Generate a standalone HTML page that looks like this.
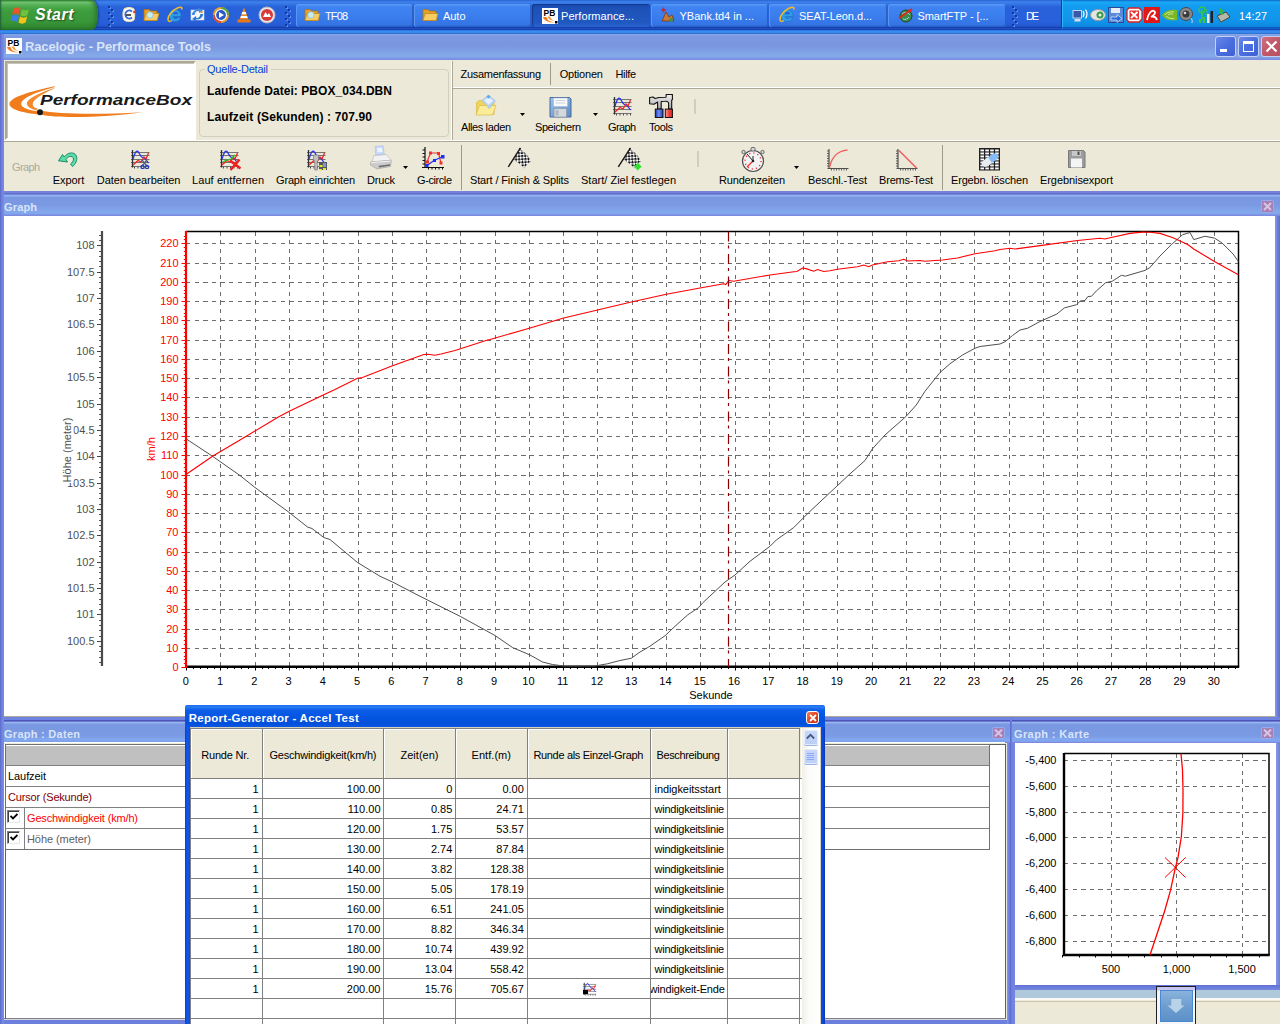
<!DOCTYPE html>
<html><head><meta charset="utf-8"><title>Racelogic - Performance Tools</title>
<style>
html,body{margin:0;padding:0;overflow:hidden;}
html{width:1280px;height:1024px;}
body{width:1280px;height:1024px;overflow:hidden;position:relative;background:#ece9d8;font-family:"Liberation Sans",sans-serif;font-size:11px;color:#000;}
div,svg{position:absolute;box-sizing:border-box;}
.t{white-space:nowrap;}

</style></head>
<body>
<!-- p_taskbar -->
<div style="left:0;top:0;width:1280px;height:30px;background:linear-gradient(#2a62d4 0,#3d82ec 2px,#3474e4 4px,#2862da 7px,#2760da 22px,#2459d0 26px,#163fae 27.500px,#2050c4 28.500px,#1640ae 29.500px,#1640ae 30px)"></div><div style="left:1061px;top:0;width:219px;height:30px;background:linear-gradient(#0c6cc9 0,#1aa8f6 7%,#129cf0 20%,#1094ea 70%,#0e88e0 88%,#0c5cb4 100%);border-left:1px solid #0a3f9a;box-shadow:inset 1px 0 0 #30b8f8"></div><div style="left:1061px;top:27px;width:219px;height:3px;background:linear-gradient(rgba(10,70,180,.8),rgba(20,90,200,.7),rgba(10,60,170,.9))"></div><div style="left:0;top:0;width:98px;height:30px;border-radius:0 6px 6px 0/0 15px 15px 0;background:linear-gradient(#2f7d2f 0,#4ea44e 1px,#72c472 2.500px,#5ab45a 4.500px,#45a445 8px,#3c9c3c 12px,#399639 22px,#308830 27px,#266e26 30px);box-shadow:inset -4px 0 5px -2px #2a702a,inset 2px 0 2px -1px #1f5c3c,1px 0 2px #173f8f"></div><svg style="left:10.500px;top:4.500px" width="22" height="20" viewBox="0 0 22 20"><path d="M2.500 3.500c2.500-1.500 4.500-1.300 7 .3l-1.500 6c-2.500-1.500-4.500-1.700-7-.3z" fill="#e8542c"/><path d="M10.800 4.200c2.500 1.500 4.700 1.500 7.200 0l-1.600 6c-2.400 1.500-4.600 1.500-7.100 0z" fill="#6fc03a"/><path d="M.8 10.800c2.500-1.400 4.500-1.200 7 .3l-1.500 6c-2.500-1.500-4.500-1.700-7-.3z" fill="#3c7fe8"/><path d="M9 11.500c2.500 1.500 4.700 1.500 7.200 0l-1.600 6c-2.400 1.500-4.600 1.500-7.100 0z" fill="#f6c21c"/></svg><div class="t" style="left:35px;top:4.5px;font-size:16px;line-height:19px;color:#fff;letter-spacing:0.512px;font-weight:bold;font-style:italic;text-shadow:1px 1px 1.500px #1d4f1d;">Start</div><div style="left:108.5px;top:6.5px;width:2px;height:2px;background:#5a8ef0"></div><div style="left:107.5px;top:5.5px;width:2px;height:2px;background:#1238a0"></div><div style="left:111.5px;top:9.5px;width:2px;height:2px;background:#5a8ef0"></div><div style="left:110.5px;top:8.5px;width:2px;height:2px;background:#1238a0"></div><div style="left:108.5px;top:12.5px;width:2px;height:2px;background:#5a8ef0"></div><div style="left:107.5px;top:11.5px;width:2px;height:2px;background:#1238a0"></div><div style="left:111.5px;top:15.5px;width:2px;height:2px;background:#5a8ef0"></div><div style="left:110.5px;top:14.5px;width:2px;height:2px;background:#1238a0"></div><div style="left:108.5px;top:18.5px;width:2px;height:2px;background:#5a8ef0"></div><div style="left:107.5px;top:17.5px;width:2px;height:2px;background:#1238a0"></div><div style="left:111.5px;top:21.5px;width:2px;height:2px;background:#5a8ef0"></div><div style="left:110.5px;top:20.5px;width:2px;height:2px;background:#1238a0"></div><div style="left:108.5px;top:24.5px;width:2px;height:2px;background:#5a8ef0"></div><div style="left:107.5px;top:23.5px;width:2px;height:2px;background:#1238a0"></div><svg style="left:121px;top:6px" width="16" height="17" viewBox="0 0 16 17"><path d="M3 3c2-2 8-2 10 0c1 3 1 8 0 11c-2 2-8 2-10 0c-1.500-3-1.500-8 0-11z" fill="#fbfbf4" stroke="#f0e0a0" stroke-width="1"/><path d="M11 5.500a4 4 0 1 0 0 6" fill="none" stroke="#3a6ad8" stroke-width="1.800"/><path d="M5 9h5" stroke="#101010" stroke-width="1.400"/><circle cx="13.300" cy="6" r="1.200" fill="#e04030"/></svg><svg style="left:143px;top:7px" width="17" height="16" viewBox="0 0 17 16"><path d="M1 2.500h5l1.500 1.500H14v9.500H1z" fill="#e8a028" stroke="#b07010" stroke-width=".8"/><path d="M3 6.500h13l-1.800 7H1z" fill="#f8cc60" stroke="#c08820" stroke-width=".8"/><circle cx="7" cy="8" r="3.200" fill="#c8ecf0" stroke="#8cc0d0" stroke-width=".8"/></svg><svg style="left:166px;top:6px" width="18" height="18" viewBox="0 0 18 18"><path d="M3 10a6 6 0 0 1 12-.8v1.300h-8a2.600 2.600 0 0 0 4.800 1h3a6.100 6.100 0 0 1-11.800-1.500z" fill="#2e9fe6" stroke="#1a70c8" stroke-width=".6"/><path d="M7 8.200h5a2.500 2.500 0 0 0-5 0z" fill="#245edb"/><path d="M15.500 3.500c1.500-2-.5-3-4-1.500c-5 2.200-10 8-9.500 12c.3 2 2.500 1.500 4 .5" fill="none" stroke="#f4b828" stroke-width="1.500"/></svg><svg style="left:189px;top:6px" width="17" height="17" viewBox="0 0 17 17"><rect x="2" y="4" width="13" height="10" fill="#f8f8f8" stroke="#c8d0e0" stroke-width=".6"/><path d="M3 9c0-4 4-6 7-5l-1-2.500 5 2.500-4 3-.3-2c-2-.5-4 1-4 4z" fill="#3a8ae8"/><path d="M14 8c0 4-4 6-7 5l1 2.500-5-2.500 4-3 .3 2c2 .5 4-1 4-4z" fill="#2a78d8"/><rect x="11.500" y="5" width="2" height="2" fill="#e88830"/></svg><svg style="left:212px;top:6px" width="18" height="18" viewBox="0 0 18 18"><circle cx="9" cy="9" r="8" fill="#e8a030"/><path d="M9 1a8 8 0 0 1 8 8H9z" fill="#58a838"/><path d="M1 9a8 8 0 0 0 8 8V9z" fill="#d84830"/><circle cx="9" cy="9" r="5.500" fill="#2a58c8" stroke="#fff" stroke-width="1.200"/><path d="M7 6l5 3-5 3z" fill="#fff"/></svg><svg style="left:235px;top:6px" width="18" height="18" viewBox="0 0 18 18"><path d="M9 1.500l4.500 12h-9z" fill="#f08a1c"/><path d="M7.300 6h3.400l.8 2.200h-5zM6 10h6l.7 2H5.300z" fill="#fff"/><path d="M2.500 13.500h13v3h-13z" fill="#e87818"/></svg><svg style="left:258px;top:6px" width="18" height="18" viewBox="0 0 18 18"><circle cx="9" cy="9" r="8" fill="#e8e8e8" stroke="#b8b8b8"/><circle cx="9" cy="9" r="6" fill="#d83838"/><path d="M5 11l2.500-5 2 3 1.500-2 2 4z" fill="#fff"/></svg><div style="left:285.5px;top:6.5px;width:2px;height:2px;background:#5a8ef0"></div><div style="left:284.5px;top:5.5px;width:2px;height:2px;background:#1238a0"></div><div style="left:288.5px;top:9.5px;width:2px;height:2px;background:#5a8ef0"></div><div style="left:287.5px;top:8.5px;width:2px;height:2px;background:#1238a0"></div><div style="left:285.5px;top:12.5px;width:2px;height:2px;background:#5a8ef0"></div><div style="left:284.5px;top:11.5px;width:2px;height:2px;background:#1238a0"></div><div style="left:288.5px;top:15.5px;width:2px;height:2px;background:#5a8ef0"></div><div style="left:287.5px;top:14.5px;width:2px;height:2px;background:#1238a0"></div><div style="left:285.5px;top:18.5px;width:2px;height:2px;background:#5a8ef0"></div><div style="left:284.5px;top:17.5px;width:2px;height:2px;background:#1238a0"></div><div style="left:288.5px;top:21.5px;width:2px;height:2px;background:#5a8ef0"></div><div style="left:287.5px;top:20.5px;width:2px;height:2px;background:#1238a0"></div><div style="left:285.5px;top:24.5px;width:2px;height:2px;background:#5a8ef0"></div><div style="left:284.5px;top:23.5px;width:2px;height:2px;background:#1238a0"></div><div style="left:296px;top:4px;width:117px;height:23px;border-radius:3px;background:linear-gradient(#5e9bf7 0,#3f84f2 12%,#3a7cec 60%,#3474e4 90%,#2b62cf 100%);box-shadow:inset 1px 0 0 #5a96f4,inset -1px -1px 0 #2a5fc8;"></div><svg style="left:304px;top:7px" width="17" height="16" viewBox="0 0 17 16"><path d="M1 2.500h5l1.500 1.500H14v9.500H1z" fill="#e8a028" stroke="#b07010" stroke-width=".8"/><path d="M3 6.500h13l-1.800 7H1z" fill="#f8cc60" stroke="#c08820" stroke-width=".8"/><circle cx="7" cy="8" r="3.200" fill="#c8ecf0" stroke="#8cc0d0" stroke-width=".8"/></svg><div class="t" style="left:325px;top:9px;font-size:11px;line-height:14px;color:#fff;letter-spacing:-0.890px;">TF08</div><div style="left:414px;top:4px;width:117px;height:23px;border-radius:3px;background:linear-gradient(#5e9bf7 0,#3f84f2 12%,#3a7cec 60%,#3474e4 90%,#2b62cf 100%);box-shadow:inset 1px 0 0 #5a96f4,inset -1px -1px 0 #2a5fc8;"></div><svg style="left:422px;top:7px" width="17" height="16" viewBox="0 0 17 16"><path d="M1 2.500h5l1.500 1.500H14v9.500H1z" fill="#e8a028" stroke="#b07010" stroke-width=".8"/><path d="M3 6.500h13l-1.800 7H1z" fill="#f8cc60" stroke="#c08820" stroke-width=".8"/></svg><div class="t" style="left:443px;top:9px;font-size:11px;line-height:14px;color:#fff;letter-spacing:-0.042px;">Auto</div><div style="left:532px;top:4px;width:118px;height:23px;border-radius:3px;background:linear-gradient(#1b4bb0,#1e52b7 20%,#2058c2 80%,#2a63cd);box-shadow:inset 1px 1px 1px #14398d;"></div><svg style="left:542px;top:8px" width="16" height="16" viewBox="0 0 16 16"><rect width="16" height="16" fill="#fff"/><path d="M1 9c1 4 6 5.500 12 5.500c-5 -.5-8-2.500-8.500-5.500z" fill="#f07c1c"/><path d="M5.500 8.500c.7 2.800 3.500 4.200 7.500 4.500c-3-1-4.500-2.500-4.800-4.500z" fill="#f59a3c"/><rect x="13" y="13" width="2.500" height="2.500" fill="#000"/><text x="1.500" y="7.500" font-family="Liberation Sans" font-weight="bold" font-size="8.500" fill="#000">PB</text></svg><div class="t" style="left:561px;top:9px;font-size:11px;line-height:14px;color:#fff;letter-spacing:0.067px;">Performance...</div><div style="left:651px;top:4px;width:117px;height:23px;border-radius:3px;background:linear-gradient(#5e9bf7 0,#3f84f2 12%,#3a7cec 60%,#3474e4 90%,#2b62cf 100%);box-shadow:inset 1px 0 0 #5a96f4,inset -1px -1px 0 #2a5fc8;"></div><svg style="left:659px;top:7px" width="17" height="17" viewBox="0 0 17 17"><path d="M3 14l4-9 3 5 3-2 2 6z" fill="#c87838" stroke="#783818" stroke-width=".8"/><path d="M2 3h5M4.500 .5v5" stroke="#e02020" stroke-width="1.600"/><circle cx="12" cy="13" r="2" fill="#389848"/></svg><div class="t" style="left:679.5px;top:9px;font-size:11px;line-height:14px;color:#fff;letter-spacing:-0.006px;">YBank.td4 in ...</div><div style="left:769px;top:4px;width:118px;height:23px;border-radius:3px;background:linear-gradient(#5e9bf7 0,#3f84f2 12%,#3a7cec 60%,#3474e4 90%,#2b62cf 100%);box-shadow:inset 1px 0 0 #5a96f4,inset -1px -1px 0 #2a5fc8;"></div><svg style="left:778px;top:6px" width="18" height="18" viewBox="0 0 18 18"><path d="M3 10a6 6 0 0 1 12-.8v1.300h-8a2.600 2.600 0 0 0 4.800 1h3a6.100 6.100 0 0 1-11.800-1.500z" fill="#2e9fe6" stroke="#1a70c8" stroke-width=".6"/><path d="M7 8.200h5a2.500 2.500 0 0 0-5 0z" fill="#245edb"/><path d="M15.500 3.500c1.500-2-.5-3-4-1.500c-5 2.200-10 8-9.500 12c.3 2 2.500 1.500 4 .5" fill="none" stroke="#f4b828" stroke-width="1.500"/></svg><div class="t" style="left:799px;top:9px;font-size:11px;line-height:14px;color:#fff;letter-spacing:-0.060px;">SEAT-Leon.d...</div><div style="left:888px;top:4px;width:118px;height:23px;border-radius:3px;background:linear-gradient(#5e9bf7 0,#3f84f2 12%,#3a7cec 60%,#3474e4 90%,#2b62cf 100%);box-shadow:inset 1px 0 0 #5a96f4,inset -1px -1px 0 #2a5fc8;"></div><svg style="left:897px;top:6px" width="18" height="18" viewBox="0 0 18 18"><circle cx="9" cy="10" r="6" fill="#3a8a48" stroke="#1a4a28"/><path d="M5 8c2-2 6-2 8 1M6 13c2 1 5 0 6-2" stroke="#9ad8f0" fill="none"/><path d="M2 12L15 3" stroke="#e02818" stroke-width="2"/><path d="M15 3l-4 .5 3 3z" fill="#e02818"/></svg><div class="t" style="left:917.5px;top:9px;font-size:11px;line-height:14px;color:#fff;letter-spacing:-0.065px;">SmartFTP - [...</div><div style="left:1013px;top:6.5px;width:2px;height:2px;background:#5a8ef0"></div><div style="left:1012px;top:5.5px;width:2px;height:2px;background:#1238a0"></div><div style="left:1016px;top:9.5px;width:2px;height:2px;background:#5a8ef0"></div><div style="left:1015px;top:8.5px;width:2px;height:2px;background:#1238a0"></div><div style="left:1013px;top:12.5px;width:2px;height:2px;background:#5a8ef0"></div><div style="left:1012px;top:11.5px;width:2px;height:2px;background:#1238a0"></div><div style="left:1016px;top:15.5px;width:2px;height:2px;background:#5a8ef0"></div><div style="left:1015px;top:14.5px;width:2px;height:2px;background:#1238a0"></div><div style="left:1013px;top:18.5px;width:2px;height:2px;background:#5a8ef0"></div><div style="left:1012px;top:17.5px;width:2px;height:2px;background:#1238a0"></div><div style="left:1016px;top:21.5px;width:2px;height:2px;background:#5a8ef0"></div><div style="left:1015px;top:20.5px;width:2px;height:2px;background:#1238a0"></div><div style="left:1013px;top:24.5px;width:2px;height:2px;background:#5a8ef0"></div><div style="left:1012px;top:23.5px;width:2px;height:2px;background:#1238a0"></div><div class="t" style="left:1026px;top:9px;font-size:11px;line-height:14px;color:#fff;letter-spacing:-2.281px;">DE</div><svg style="left:1072px;top:7px" width="18" height="16" viewBox="0 0 18 16"><rect x="1" y="3.500" width="8.500" height="7.500" fill="#3a58a8" stroke="#c8d4ec" stroke-width="1"/><rect x="2.500" y="12" width="6" height="2.500" fill="#d8dce8"/><path d="M11 4q2 3 0 6M13.500 2.500q3 4.500 0 9" stroke="#fff" fill="none" stroke-width="1.200"/></svg><svg style="left:1090px;top:7px" width="17" height="16" viewBox="0 0 17 16"><ellipse cx="8" cy="8" rx="7.500" ry="5.500" fill="#e4e4e4" stroke="#9a9a9a"/><circle cx="10" cy="8" r="3.500" fill="#3a9a4a"/><circle cx="10" cy="8" r="1.500" fill="#e8f0e8"/></svg><svg style="left:1108px;top:7px" width="16" height="16" viewBox="0 0 16 16"><rect x=".5" y=".5" width="15" height="15" fill="#5a8ad8" stroke="#2a4a98"/><rect x="3" y="1" width="9" height="5" fill="#e8eef8"/><path d="M3 10h6V7.500l5 4-5 4V13H3z" fill="#2a6ae0" stroke="#fff" stroke-width=".6"/></svg><svg style="left:1126px;top:7px" width="17" height="16" viewBox="0 0 17 16"><path d="M3 1h10l3 3v8l-3 3H3l-2-2V3z" fill="#fff" stroke="#e02020" stroke-width="1.300"/><rect x="3.500" y="3.500" width="9.500" height="9" fill="#e83030"/><path d="M5 5l6.500 6M11.500 5l-6.500 6" stroke="#fff" stroke-width="1.800"/></svg><svg style="left:1144px;top:7px" width="16" height="16" viewBox="0 0 16 16"><rect width="16" height="16" fill="#e01818"/><path d="M3 13c1-7 5-10 7-9s1 4-3 6c3-1 5 0 6 3" fill="none" stroke="#fff" stroke-width="1.800"/></svg><svg style="left:1161px;top:8px" width="17" height="14" viewBox="0 0 17 14"><path d="M1 7c3-5 9-6 15-5v10c-6 1-12 0-15-5z" fill="#7ab828"/><path d="M4 7c2-3 6-3.500 9-3M5 8c2 2 5 3 8 2.500M7 7c1-1 3-1.500 5-1" stroke="#d8f0a0" fill="none" stroke-width=".9"/></svg><svg style="left:1178px;top:6px" width="18" height="18" viewBox="0 0 18 18"><circle cx="8" cy="8" r="6.500" fill="#8a8a8a" stroke="#4a4a4a"/><circle cx="8" cy="8" r="3.500" fill="#3a3a3a"/><circle cx="7" cy="7" r="1.300" fill="#d8d8d8"/><path d="M13 12q2 2 1 5" stroke="#c8d8f0" fill="none"/></svg><svg style="left:1197px;top:6px" width="17" height="18" viewBox="0 0 17 18"><circle cx="5" cy="4" r="3" fill="none" stroke="#38c838" stroke-width="1.300"/><path d="M5 4v10" stroke="#38c838" stroke-width="1.500"/><path d="M9 3q3 3 0 6" stroke="#38c838" fill="none"/><rect x="2" y="13" width="2.500" height="4" fill="#38c838"/><rect x="6" y="11" width="2.500" height="6" fill="#38c838"/><rect x="10" y="8" width="2.500" height="9" fill="#e8e8e8"/><rect x="13.500" y="5" width="2.500" height="12" fill="#202020"/></svg><svg style="left:1215px;top:7px" width="17" height="16" viewBox="0 0 17 16"><path d="M2 9l9-4 4 5-9 5z" fill="#b8b8a8" stroke="#4a4a3a"/><path d="M5 1l4 3-2 1 2 3-5-2z" fill="#38b838"/></svg><div class="t" style="left:1239px;top:9px;font-size:11px;line-height:14px;color:#fff;letter-spacing:0.119px;">14:27</div>
<!-- p_window -->
<div style="left:0;top:30px;width:1280px;height:4px;background:linear-gradient(#2b74e4,#3a8cee 40%,#3686e8 70%,#2a68c8)"></div><div style="left:0;top:34px;width:1280px;height:26px;background:linear-gradient(#86a6ea 0,#7b98e0 12%,#7a96df 45%,#80a2e6 70%,#85abe9 85%,#7c94e3 95%,#7a88e0 100%)"></div><div style="left:0;top:34px;width:4px;height:990px;background:linear-gradient(90deg,#5a68cc,#6d7fdc 40%,#7a90e2)"></div><svg style="left:6px;top:38px" width="16" height="16" viewBox="0 0 16 16"><rect width="16" height="16" fill="#fff"/><path d="M1 9c1 4 6 5.500 12 5.500c-5 -.5-8-2.500-8.500-5.500z" fill="#f07c1c"/><path d="M5.500 8.500c.7 2.800 3.500 4.200 7.500 4.500c-3-1-4.500-2.500-4.800-4.500z" fill="#f59a3c"/><rect x="13" y="13" width="2.500" height="2.500" fill="#000"/><text x="1.500" y="7.500" font-family="Liberation Sans" font-weight="bold" font-size="8.500" fill="#000">PB</text></svg><div class="t" style="left:25px;top:39px;font-size:13px;line-height:16px;color:#d8e4f8;letter-spacing:-0.134px;font-weight:bold;">Racelogic - Performance Tools</div><div style="left:1215px;top:36px;width:21px;height:21px;border-radius:3px;border:1px solid #c4d0f2;background:linear-gradient(135deg,#6888ea,#4a6ee0 50%,#4060d0);"></div><div style="left:1220px;top:49px;width:7px;height:3px;background:#fff"></div><div style="left:1238px;top:36px;width:21px;height:21px;border-radius:3px;border:1px solid #c4d0f2;background:linear-gradient(135deg,#6888ea,#4a6ee0 50%,#4060d0);"></div><div style="left:1243px;top:41px;width:11px;height:11px;border:1px solid #fff;border-top-width:3px"></div><div style="left:1261px;top:36px;width:21px;height:21px;border-radius:3px;border:1px solid #c4d0f2;background:linear-gradient(135deg,#d07080,#c05868 50%,#b85060);"></div><svg style="left:1265px;top:40px" width="13" height="13" viewBox="0 0 13 13"><path d="M1.500 1.500l10 10M11.500 1.500l-10 10" stroke="#fff" stroke-width="2.200"/></svg><div style="left:4px;top:60px;width:1276px;height:131px;background:#ece9d8"></div>
<!-- p_toolbar -->
<div style="left:5px;top:61px;width:191px;height:79px;background:#fff;border:2px solid;border-color:#aca899 #fff #fff #aca899;box-shadow:inset 1px 1px 0 #c8c4b4"></div><svg style="left:5px;top:80px" width="150" height="45" viewBox="5 80 150 45"><path d="M55 86.200C35 90 9 97 9.400 104C9.600 110 25 113 37.500 114.400L37.500 111.200C27 110 21 107 21.200 103.700C21.500 98 36 92 55 86.900Z" fill="#f07c1c"/><path d="M53.750 88.100C40 93 27 99 26.900 103.500C27 107 32 109.500 37.500 110.600L37.500 108.750C34 107.500 32.500 106 32.750 104C33 100 40 95 53.750 88.750Z" fill="#f28a2c"/><path d="M40 110.500C60 114.500 100 114.500 142.500 112.200C110 117 60 119 40 114.500Z" fill="#f07c1c"/><circle cx="40" cy="112.200" r="3" fill="#1a1a1a"/></svg><div class="t" style="left:40px;top:91.7px;font-size:19px;line-height:22px;color:#1a1a1a;letter-spacing:-0.004px;font-weight:bold;font-style:italic;transform:scaleY(.75);transform-origin:left top;">PerformanceBox</div><div style="left:199px;top:69px;width:250px;height:68px;border:1px solid #d0d0bf;border-radius:4px"></div><div style="left:205px;top:62px;width:66px;height:14px;background:#ece9d8"></div><div class="t" style="left:207px;top:62px;font-size:11px;line-height:14px;color:#0046d5;letter-spacing:-0.215px;">Quelle-Detail</div><div class="t" style="left:207px;top:83.5px;font-size:12px;line-height:15px;color:#000;letter-spacing:0.060px;font-weight:bold;">Laufende Datei: PBOX_034.DBN</div><div class="t" style="left:207px;top:109.5px;font-size:12px;line-height:15px;color:#000;letter-spacing:0.135px;font-weight:bold;">Laufzeit (Sekunden) : 707.90</div><div style="left:451px;top:61px;width:1px;height:79px;background:#fff"></div><div style="left:452px;top:61px;width:1px;height:80px;background:#aca899"></div><div style="left:453px;top:87px;width:827px;height:1px;background:#fff"></div><div style="left:453px;top:88px;width:827px;height:1px;background:#aca899"></div><div style="left:4px;top:140px;width:1276px;height:1px;background:#fff"></div><div style="left:4px;top:141px;width:1276px;height:1px;background:#aca899"></div><div class="t" style="left:460.5px;top:66.7px;font-size:11px;line-height:14px;color:#000;letter-spacing:-0.298px;">Zusamenfassung</div><div style="left:550px;top:63px;width:1px;height:22px;background:#9d9a8c"></div><div class="t" style="left:559.7px;top:66.7px;font-size:11px;line-height:14px;color:#000;letter-spacing:-0.192px;">Optionen</div><div class="t" style="left:615.5px;top:66.7px;font-size:11px;line-height:14px;color:#000;letter-spacing:-0.376px;">Hilfe</div><svg style="left:474px;top:94px" width="23" height="23" viewBox="0 0 23 23"><path d="M2.500 8.500l2.500-2h4l2 2h9v12h-17.500z" fill="#f2d45c" stroke="#d8b840" stroke-width=".7"/><path d="M8 6.500L14.500 1l7 6-7 6.500z" fill="#c0d8f4" stroke="#9cbce4" stroke-width=".7"/><path d="M10.500 6.500l4-3.300 4.200 3.600-4.200 3.700z" fill="#e8f2fc"/><circle cx="14.500" cy="2.800" r="1.600" fill="#58a8f0"/><path d="M2 21l3.500-9.500h7l2.500 3 3-3h4l-3.500 9.500z" fill="#fbec98" stroke="#d8bc48" stroke-width=".7"/><path d="M13 12l2 3 3.500-3.500z" fill="#a8d0f4"/></svg><div class="t" style="left:461px;top:119.5px;font-size:11px;line-height:14px;color:#000;letter-spacing:-0.381px;">Alles laden</div><svg style="left:520.2px;top:113px" width="5" height="3" viewBox="0 0 5 3"><path d="M0 0h5l-2.500 3z" fill="#000"/></svg><svg style="left:548.5px;top:95.5px" width="23" height="22" viewBox="0 0 23 22"><defs><linearGradient id="flp" x1="0" y1="0" x2="1" y2="1"><stop offset="0" stop-color="#9cc4ec"/><stop offset="1" stop-color="#5c8cc4"/></linearGradient></defs><path d="M1 1.500h19.500l1.500 1.500v18H1z" fill="url(#flp)" stroke="#48689c" stroke-width="1"/><rect x="4.500" y="2" width="14" height="8.500" fill="#f8fafc" stroke="#a8b8d0" stroke-width=".6"/><path d="M6.500 4.500h10M6.500 7h10" stroke="#c0c8d4" stroke-width=".8"/><rect x="5" y="12.500" width="12.500" height="8.500" fill="#d4d8dc" stroke="#8090a8" stroke-width=".6"/><rect x="6.500" y="14" width="3" height="5.500" fill="#b0b8c4"/></svg><div class="t" style="left:535px;top:119.5px;font-size:11px;line-height:14px;color:#000;letter-spacing:-0.441px;">Speichern</div><svg style="left:592.7px;top:113px" width="5" height="3" viewBox="0 0 5 3"><path d="M0 0h5l-2.500 3z" fill="#000"/></svg><svg style="left:612px;top:96px" width="20" height="20" viewBox="0 0 20 20"><path d="M1 3.5h18.500" stroke="#747474" stroke-width="1"/><path d="M1 6.5h18.500" stroke="#747474" stroke-width="1"/><path d="M1 10.5h18.500" stroke="#747474" stroke-width="1"/><path d="M1 13.5h18.500" stroke="#747474" stroke-width="1"/><path d="M1 17.5h18.500" stroke="#747474" stroke-width="1"/><path d="M2.500 1v17.500" stroke="#303030" stroke-width="1.300"/><path d="M4.500 17.500v2M8 17.500v2M11.500 17.500v2M15 17.500v2M18.500 17.500v2" stroke="#505050" stroke-width="1"/><path d="M3 10C5 3 6.500 1 8 2.500S11 9 13 8.500S16.500 12 18.500 14" fill="none" stroke="#2030f0" stroke-width="1.250"/><path d="M3 16l5-4.500 3 1.500 3-5 2 2 2.500-6" fill="none" stroke="#f02020" stroke-width="1.250"/></svg><div class="t" style="left:608px;top:119.5px;font-size:11px;line-height:14px;color:#000;letter-spacing:-0.642px;">Graph</div><svg style="left:649px;top:94px" width="24" height="24" viewBox="0 0 24 24"><defs><linearGradient id="tg" x1="0" y1="0" x2="0" y2="1"><stop offset="0" stop-color="#f0f0f0"/><stop offset="1" stop-color="#a8a8a8"/></linearGradient><linearGradient id="tb" x1="0" y1="0" x2="1" y2="0"><stop offset="0" stop-color="#2030a8"/><stop offset=".45" stop-color="#7090f0"/><stop offset="1" stop-color="#2838b8"/></linearGradient><linearGradient id="tr" x1="0" y1="0" x2="1" y2="0"><stop offset="0" stop-color="#f8a0a0"/><stop offset=".5" stop-color="#f04040"/><stop offset="1" stop-color="#d02020"/></linearGradient></defs><path d="M.600 3.500L4 3L6 4.500L10 3.500L17 3.200L17.200 .500L23.400 .500L23.400 5.800L22.700 6L22.700 15L19.600 15L19.600 9C19 7.500 17.500 7 16 7.300L12.200 7.500L12.200 15L8.600 15L8.600 8L5 10.300L.600 9.800Z" fill="url(#tg)" stroke="#101010" stroke-width="1.100" stroke-linejoin="round"/><rect x="6.300" y="15.100" width="7.700" height="8.400" fill="url(#tb)" stroke="#101010" stroke-width="1"/><rect x="16.300" y="15.100" width="7.300" height="8.400" fill="url(#tr)" stroke="#101010" stroke-width="1"/></svg><div class="t" style="left:649px;top:119.5px;font-size:11px;line-height:14px;color:#000;letter-spacing:-0.420px;">Tools</div><div style="left:694px;top:99px;width:2px;height:15px;background:#d2cebe"></div><div class="t" style="left:12px;top:159.5px;font-size:11px;line-height:14px;color:#aca899;letter-spacing:-0.642px;">Graph</div><svg style="left:57px;top:150px" width="21" height="18" viewBox="0 0 21 18"><path d="M1.500 10.800L5.500 4.500L7.200 7C10 3.500 14 2 17 3.500C20 5 20.500 9 19 12C18 14 17 15.500 15.500 16.500L13.500 14C15 13 16.500 11 16.500 9C16.500 7 14.500 6 12.500 6.500C11 7 10 8 9 9.500L10.500 12Z" fill="#58dca8" stroke="#1f8a68" stroke-width="1" stroke-linejoin="round"/></svg><div class="t" style="left:52.7px;top:172.8px;font-size:11px;line-height:14px;color:#000;letter-spacing:-0.038px;">Export</div><svg style="left:129.5px;top:149px" width="20" height="20" viewBox="0 0 20 20"><path d="M1 3.5h18.500" stroke="#747474" stroke-width="1"/><path d="M1 6.5h18.500" stroke="#747474" stroke-width="1"/><path d="M1 10.5h18.500" stroke="#747474" stroke-width="1"/><path d="M1 13.5h18.500" stroke="#747474" stroke-width="1"/><path d="M1 17.5h18.500" stroke="#747474" stroke-width="1"/><path d="M2.500 1v17.500" stroke="#303030" stroke-width="1.300"/><path d="M4.500 17.500v2M8 17.500v2M11.500 17.500v2M15 17.500v2M18.500 17.500v2" stroke="#505050" stroke-width="1"/><path d="M3 10C5 3 6.500 1 8 2.500S11 9 13 8.500S16.500 12 18.500 14" fill="none" stroke="#2030f0" stroke-width="1.250"/><path d="M3 16l5-4.500 3 1.500 3-5 2 2 2.500-6" fill="none" stroke="#f02020" stroke-width="1.250"/><path d="M12 11l5 6M17 11l-5 6" stroke="#506080" stroke-width="1.200"/><circle cx="12.500" cy="18" r="1.600" fill="none" stroke="#2040c8" stroke-width="1.200"/><circle cx="17" cy="18" r="1.600" fill="none" stroke="#2040c8" stroke-width="1.200"/></svg><div class="t" style="left:96.8px;top:172.8px;font-size:11px;line-height:14px;color:#000;letter-spacing:-0.059px;">Daten bearbeiten</div><svg style="left:218.5px;top:149px" width="22" height="22" viewBox="0 0 22 22"><path d="M1 3.5h18.500" stroke="#747474" stroke-width="1"/><path d="M1 6.5h18.500" stroke="#747474" stroke-width="1"/><path d="M1 10.5h18.500" stroke="#747474" stroke-width="1"/><path d="M1 13.5h18.500" stroke="#747474" stroke-width="1"/><path d="M1 17.5h18.500" stroke="#747474" stroke-width="1"/><path d="M2.500 1v17.500" stroke="#303030" stroke-width="1.300"/><path d="M4.500 17.500v2M8 17.500v2M11.500 17.500v2M15 17.500v2M18.500 17.500v2" stroke="#505050" stroke-width="1"/><path d="M3 10C5 3 6.500 1 8 2.500S11 9 13 8.500S16.500 12 18.500 14" fill="none" stroke="#2030f0" stroke-width="1.250"/><path d="M3 16l5-4.500 3 1.500 3-5 2 2 2.500-6" fill="none" stroke="#f02020" stroke-width="1.250"/><path d="M4 13c3-3 6-2 8-3l4-4" fill="none" stroke="#20d020" stroke-width="1.300"/><path d="M11 11.500l10.500 8M20.500 10.500L11.500 21" stroke="#f02020" stroke-width="2.400"/></svg><div class="t" style="left:192px;top:172.8px;font-size:11px;line-height:14px;color:#000;letter-spacing:0.082px;">Lauf entfernen</div><svg style="left:306px;top:149px" width="22" height="22" viewBox="0 0 22 22"><path d="M1 3.5h18.500" stroke="#747474" stroke-width="1"/><path d="M1 6.5h18.500" stroke="#747474" stroke-width="1"/><path d="M1 10.5h18.500" stroke="#747474" stroke-width="1"/><path d="M1 13.5h18.500" stroke="#747474" stroke-width="1"/><path d="M1 17.5h18.500" stroke="#747474" stroke-width="1"/><path d="M2.500 1v17.500" stroke="#303030" stroke-width="1.300"/><path d="M4.500 17.500v2M8 17.500v2M11.500 17.500v2M15 17.500v2M18.500 17.500v2" stroke="#505050" stroke-width="1"/><path d="M3 10C5 3 6.500 1 8 2.500S11 9 13 8.500S16.500 12 18.500 14" fill="none" stroke="#2030f0" stroke-width="1.250"/><path d="M3 16l5-4.500 3 1.500 3-5 2 2 2.500-6" fill="none" stroke="#f02020" stroke-width="1.250"/><path d="M7.500 6h5v4.500l-1.200 2v8.500h-2.600v-8.500l-1.200-2z" fill="#c0c0c0" stroke="#707070" stroke-width=".6"/><rect x="13" y="13" width="8" height="8" fill="#505868"/><path d="M13.500 16h3v2h-3zM17 19h3v2h-3zM13 20h3v1.500h-3z" fill="#e8e820"/><rect x="17" y="14" width="3" height="4" fill="#8898b8"/></svg><div class="t" style="left:276px;top:172.8px;font-size:11px;line-height:14px;color:#000;letter-spacing:-0.154px;">Graph einrichten</div><svg style="left:369px;top:145px" width="25" height="26" viewBox="0 0 25 26"><path d="M6 1.400L14.100 .750L15.400 9.500L6.600 10.100z" fill="#c4d6f8" stroke="#a8bce8" stroke-width=".5"/><path d="M8 3l5-.4.600 4.500-5 .5z" fill="#eef4fe"/><path d="M4.750 10.750L17.250 9.500L22.250 15.100L2.900 17z" fill="#f2f2f2" stroke="#b4b4b4" stroke-width=".6"/><path d="M1.600 17L22.250 15.400L21.600 21.400L7.900 23.900L1.600 20.100z" fill="#cccccc" stroke="#9c9c9c" stroke-width=".6"/><path d="M9.750 20.800L21 19.200L21 20.700L9.750 22.400z" fill="#6c6c6c"/><path d="M2 17.600L21.800 16" stroke="#fff" stroke-width=".8"/></svg><div class="t" style="left:367px;top:172.8px;font-size:11px;line-height:14px;color:#000;letter-spacing:-0.181px;">Druck</div><svg style="left:402.5px;top:165.5px" width="5" height="3" viewBox="0 0 5 3"><path d="M0 0h5l-2.500 3z" fill="#000"/></svg><svg style="left:421px;top:146px" width="24" height="25" viewBox="0 0 24 25"><path d="M4 1v21M1 21.500h22" stroke="#101010" stroke-width="1.200"/><path d="M1.500 4h2.500M1.500 7.500h2.500M1.500 11h2.500M1.500 14.500h2.500M1.500 18h2.500M7.500 21.500v2M11 21.500v2M14.500 21.500v2M18 21.500v2M21.500 21.500v2" stroke="#101010" stroke-width="1"/><path d="M6 16l3.500-9h8l2.500 10" fill="none" stroke="#f03030" stroke-width="1.200"/><path d="M6 19.500l7-5 9-4" fill="none" stroke="#2030f0" stroke-width="1.200"/><rect x="5" y="14.500" width="3" height="3" fill="#f03030"/><rect x="8" y="5.500" width="3" height="3" fill="#f03030"/><rect x="16" y="6" width="3" height="3" fill="#f03030"/><rect x="18.500" y="15.500" width="3" height="3" fill="#f03030"/><rect x="4.500" y="18" width="3" height="3" fill="#2030f0"/><rect x="12" y="13" width="3" height="3" fill="#2030f0"/><rect x="20" y="9" width="3.500" height="3.500" fill="#2030f0"/></svg><div class="t" style="left:417px;top:172.8px;font-size:11px;line-height:14px;color:#000;letter-spacing:-0.412px;">G-circle</div><div style="left:461px;top:145px;width:1px;height:45px;background:#9d9a8c"></div><svg style="left:506px;top:146px" width="28" height="26" viewBox="0 0 28 26"><defs><pattern id="ck0" width="4.400" height="4.400" patternUnits="userSpaceOnUse" patternTransform="rotate(42)"><rect width="4.400" height="4.400" fill="#fff"/><rect width="2.200" height="2.200" fill="#181818"/><rect x="2.200" y="2.200" width="2.200" height="2.200" fill="#181818"/></pattern></defs><path d="M14 3.500C19 6 23 10.500 25 15.500C22 17 20 19.500 18.500 22.500C15 18.500 11 15.500 7 13.500z" fill="url(#ck0)"/><path d="M2.300 20.800L14 2.700" stroke="#181818" stroke-width="1.400"/><circle cx="14" cy="2.700" r="1" fill="#181818"/></svg><div class="t" style="left:470px;top:172.8px;font-size:11px;line-height:14px;color:#000;letter-spacing:-0.140px;">Start / Finish &amp; Splits</div><svg style="left:615.5px;top:146px" width="28" height="26" viewBox="0 0 28 26"><defs><pattern id="ck1" width="4.400" height="4.400" patternUnits="userSpaceOnUse" patternTransform="rotate(42)"><rect width="4.400" height="4.400" fill="#fff"/><rect width="2.200" height="2.200" fill="#181818"/><rect x="2.200" y="2.200" width="2.200" height="2.200" fill="#181818"/></pattern></defs><path d="M14 3.500C19 6 23 10.500 25 15.500C22 17 20 19.500 18.500 22.500C15 18.500 11 15.500 7 13.500z" fill="url(#ck1)"/><path d="M2.300 20.800L14 2.700" stroke="#181818" stroke-width="1.400"/><circle cx="14" cy="2.700" r="1" fill="#181818"/><path d="M21.800 16.800l3.800 3.800-3.800 3.800-3.800-3.800z" fill="#30e030"/></svg><div class="t" style="left:581px;top:172.8px;font-size:11px;line-height:14px;color:#000;letter-spacing:0.012px;">Start/ Ziel festlegen</div><div style="left:697px;top:151px;width:2px;height:16px;background:#d2cebe"></div><svg style="left:739.5px;top:147px" width="26" height="26" viewBox="0 0 26 26"><circle cx="13" cy="14" r="10.500" fill="#f4f4f4" stroke="#505050" stroke-width="1.200"/><rect x="11" y=".5" width="4" height="3.500" rx="1" fill="#d8d8d8" stroke="#505050" stroke-width=".8"/><circle cx="3.500" cy="5" r="1.700" fill="#d8d8d8" stroke="#505050" stroke-width=".8"/><circle cx="22.500" cy="5" r="1.700" fill="#d8d8d8" stroke="#505050" stroke-width=".8"/><circle cx="13" cy="14" r="8" fill="none" stroke="#f03030" stroke-width="1.400" stroke-dasharray="1.200 3"/><path d="M13 14L7 7" stroke="#202020" stroke-width="1"/><path d="M13 14v-5" stroke="#202020" stroke-width="1"/><path d="M13 14l-6 6" stroke="#f03030" stroke-width="1.200"/><circle cx="13" cy="14" r="1.300" fill="#202020"/></svg><div class="t" style="left:719px;top:172.8px;font-size:11px;line-height:14px;color:#000;letter-spacing:-0.171px;">Rundenzeiten</div><svg style="left:793.5px;top:165.5px" width="5" height="3" viewBox="0 0 5 3"><path d="M0 0h5l-2.500 3z" fill="#000"/></svg><svg style="left:826px;top:148px" width="24" height="24" viewBox="0 0 24 24"><path d="M3 1v20M1.500 20.500h21" stroke="#505050" stroke-width="1.200"/><path d="M1 3h2M1 5.500h2M1 8h2M1 10.500h2M1 13h2M1 15.500h2M1 18h2M5.500 20.500v2M8 20.500v2M10.500 20.500v2M13 20.500v2M15.500 20.500v2M18 20.500v2M20.500 20.500v2" stroke="#505050" stroke-width=".9"/><path d="M3.500 20c1.500-9 7-17 18-18" fill="none" stroke="#f06060" stroke-width="1.400"/></svg><div class="t" style="left:808px;top:172.8px;font-size:11px;line-height:14px;color:#000;letter-spacing:-0.082px;">Beschl.-Test</div><svg style="left:895px;top:148px" width="24" height="24" viewBox="0 0 24 24"><path d="M3 1v20M1.500 20.500h21" stroke="#505050" stroke-width="1.200"/><path d="M1 3h2M1 5.500h2M1 8h2M1 10.500h2M1 13h2M1 15.500h2M1 18h2M5.500 20.500v2M8 20.500v2M10.500 20.500v2M13 20.500v2M15.500 20.500v2M18 20.500v2M20.500 20.500v2" stroke="#505050" stroke-width=".9"/><path d="M4 2.500l17.500 17.500" fill="none" stroke="#f06060" stroke-width="1.600"/></svg><div class="t" style="left:879px;top:172.8px;font-size:11px;line-height:14px;color:#000;letter-spacing:-0.179px;">Brems-Test</div><div style="left:942px;top:145px;width:1px;height:45px;background:#9d9a8c"></div><svg style="left:979px;top:148px" width="21" height="22.5" viewBox="0 0 21 22.5"><rect x="0" y="0" width="21" height="22.500" fill="#202020"/><rect x="1.4" y="1.5" width="3.600" height="1.900" fill="#fff"/><rect x="6.3" y="1.5" width="3.600" height="1.900" fill="#fff"/><rect x="11.2" y="1.5" width="3.600" height="1.900" fill="#fff"/><rect x="16.1" y="1.5" width="3.600" height="1.900" fill="#fff"/><rect x="1.4" y="4.5" width="3.600" height="1.900" fill="#fff"/><rect x="6.3" y="4.5" width="3.600" height="1.900" fill="#fff"/><rect x="11.2" y="4.5" width="3.600" height="1.900" fill="#fff"/><rect x="16.1" y="4.5" width="3.600" height="1.900" fill="#fff"/><rect x="1.4" y="7.5" width="3.600" height="1.900" fill="#fff"/><rect x="6.3" y="7.5" width="3.600" height="1.900" fill="#fff"/><rect x="11.2" y="7.5" width="3.600" height="1.900" fill="#fff"/><rect x="16.1" y="7.5" width="3.600" height="1.900" fill="#fff"/><rect x="1.4" y="10.5" width="3.600" height="1.900" fill="#fff"/><rect x="6.3" y="10.5" width="3.600" height="1.900" fill="#fff"/><rect x="11.2" y="10.5" width="3.600" height="1.900" fill="#fff"/><rect x="16.1" y="10.5" width="3.600" height="1.900" fill="#fff"/><rect x="1.4" y="13.5" width="3.600" height="1.900" fill="#fff"/><rect x="6.3" y="13.5" width="3.600" height="1.900" fill="#fff"/><rect x="11.2" y="13.5" width="3.600" height="1.900" fill="#fff"/><rect x="16.1" y="13.5" width="3.600" height="1.900" fill="#fff"/><rect x="1.4" y="16.5" width="3.600" height="1.900" fill="#fff"/><rect x="6.3" y="16.5" width="3.600" height="1.900" fill="#fff"/><rect x="11.2" y="16.5" width="3.600" height="1.900" fill="#fff"/><rect x="16.1" y="16.5" width="3.600" height="1.900" fill="#fff"/><rect x="1.4" y="19.5" width="3.600" height="1.900" fill="#fff"/><rect x="6.3" y="19.5" width="3.600" height="1.900" fill="#fff"/><rect x="11.2" y="19.5" width="3.600" height="1.900" fill="#fff"/><rect x="16.1" y="19.5" width="3.600" height="1.900" fill="#fff"/><path d="M4.500 12.500l9-6.500c2-1.400 4.200-1 5.300.6s.6 3.600-1.200 4.900l-9 6.500c-1.800 1.200-4 .8-5.200-.8s-.7-3.500 1.100-4.700z" fill="#84bcf8"/><path d="M4.500 12.500l4.500-3.200 4 5.600-4.400 3.100c-1.800 1.200-4 .8-5.200-.8s-.7-3.500 1.100-4.700z" fill="#e8ecee"/></svg><div class="t" style="left:951px;top:172.8px;font-size:11px;line-height:14px;color:#000;letter-spacing:-0.178px;">Ergebn. löschen</div><svg style="left:1068px;top:149.5px" width="17.5" height="18.5" viewBox="0 0 17.5 18.5"><path d="M.5.500h15l1.500 1.500v15.500H.5z" fill="#9c9c9c" stroke="#787878" stroke-width="1"/><rect x="4" y="1" width="9" height="5" fill="#c8c8c8"/><rect x="9.500" y="1.500" width="2" height="3.500" fill="#505050"/><rect x="3" y="8.500" width="11" height="9" fill="#f4f4f4"/></svg><div class="t" style="left:1040px;top:172.8px;font-size:11px;line-height:14px;color:#000;letter-spacing:-0.076px;">Ergebnisexport</div>
<!-- p_graph -->
<div style="left:4px;top:191px;width:1276px;height:25px;background:linear-gradient(#7682de 0,#7480dc 2px,#606ec8 2.600px,#6a7cd0 3.400px,#98b8f6 4px,#8eaef0 5px,#7a98e2 6.500px,#7b99e3 14px,#83a8ec 21px,#82a6ec 23px,#7c8ae0 24px,#7c8ae0 25px)"></div><div class="t" style="left:4px;top:199.5px;font-size:11px;line-height:14px;color:#d8e4f8;letter-spacing:0.152px;font-weight:bold;">Graph</div><div style="left:1261px;top:200px;width:13px;height:13px;border:1px solid #9aa8ec;background:#a680b4;border-radius:2px"></div><svg style="left:1263px;top:202px" width="9" height="9" viewBox="0 0 9 9"><path d="M1 1l7 7M8 1l-7 7" stroke="#d8c4e4" stroke-width="2"/></svg><div style="left:4px;top:216px;width:1271px;height:501px;background:#fff"></div><div style="left:1275px;top:216px;width:5px;height:510px;background:linear-gradient(90deg,#8a9ae6,#6d7fdc 50%,#5f6ed0)"></div><div style="left:4px;top:716px;width:1272px;height:1px;background:#aca899"></div><svg style="left:0;top:216px" width="1280" height="501" viewBox="0 216 1280 501" font-family="Liberation Sans" font-size="11"><path d="M220.5 231.5V667M255.5 231.5V667M289.5 231.5V667M323.5 231.5V667M358.5 231.5V667M392.5 231.5V667M426.5 231.5V667M460.5 231.5V667M495.5 231.5V667M529.5 231.5V667M563.5 231.5V667M597.5 231.5V667M632.5 231.5V667M666.5 231.5V667M700.5 231.5V667M735.5 231.5V667M769.5 231.5V667M803.5 231.5V667M837.5 231.5V667M872.5 231.5V667M906.5 231.5V667M940.5 231.5V667M974.5 231.5V667M1009.5 231.5V667M1043.5 231.5V667M1077.5 231.5V667M1111.5 231.5V667M1146.5 231.5V667M1180.5 231.5V667M1214.5 231.5V667M186 648.5H1238.5M186 629.5H1238.5M186 609.5H1238.5M186 590.5H1238.5M186 571.5H1238.5M186 552.5H1238.5M186 532.5H1238.5M186 513.5H1238.5M186 494.5H1238.5M186 475.5H1238.5M186 455.5H1238.5M186 436.5H1238.5M186 417.5H1238.5M186 397.5H1238.5M186 378.5H1238.5M186 359.5H1238.5M186 340.5H1238.5M186 320.5H1238.5M186 301.5H1238.5M186 282.5H1238.5M186 263.5H1238.5M186 243.5H1238.5" stroke="#6c6c6c" stroke-width="1" stroke-dasharray="4.300 4.300" fill="none" shape-rendering="crispEdges"/><path d="M186 231.5H1238.5V667" stroke="#000" stroke-width="1.500" fill="none"/><path d="M186 666.7H1239.2" stroke="#000" stroke-width="2.500"/><path d="M186.5 667v3.5M193.5 667v2M200.5 667v2M207.5 667v2M214.5 667v2M220.5 667v3.5M227.5 667v2M234.5 667v2M241.5 667v2M248.5 667v2M255.5 667v3.5M262.5 667v2M268.5 667v2M275.5 667v2M282.5 667v2M289.5 667v3.5M296.5 667v2M303.5 667v2M310.5 667v2M316.5 667v2M323.5 667v3.5M330.5 667v2M337.5 667v2M344.5 667v2M351.5 667v2M358.5 667v3.5M364.5 667v2M371.5 667v2M378.5 667v2M385.5 667v2M392.5 667v3.5M399.5 667v2M406.5 667v2M412.5 667v2M419.5 667v2M426.5 667v3.5M433.5 667v2M440.5 667v2M447.5 667v2M454.5 667v2M460.5 667v3.5M467.5 667v2M474.5 667v2M481.5 667v2M488.5 667v2M495.5 667v3.5M501.5 667v2M508.5 667v2M515.5 667v2M522.5 667v2M529.5 667v3.5M536.5 667v2M543.5 667v2M549.5 667v2M556.5 667v2M563.5 667v3.5M570.5 667v2M577.5 667v2M584.5 667v2M591.5 667v2M597.5 667v3.5M604.5 667v2M611.5 667v2M618.5 667v2M625.5 667v2M632.5 667v3.5M639.5 667v2M645.5 667v2M652.5 667v2M659.5 667v2M666.5 667v3.5M673.5 667v2M680.5 667v2M687.5 667v2M693.5 667v2M700.5 667v3.5M707.5 667v2M714.5 667v2M721.5 667v2M728.5 667v2M735.5 667v3.5M741.5 667v2M748.5 667v2M755.5 667v2M762.5 667v2M769.5 667v3.5M776.5 667v2M782.5 667v2M789.5 667v2M796.5 667v2M803.5 667v3.5M810.5 667v2M817.5 667v2M824.5 667v2M830.5 667v2M837.5 667v3.5M844.5 667v2M851.5 667v2M858.5 667v2M865.5 667v2M872.5 667v3.5M878.5 667v2M885.5 667v2M892.5 667v2M899.5 667v2M906.5 667v3.5M913.5 667v2M920.5 667v2M926.5 667v2M933.5 667v2M940.5 667v3.5M947.5 667v2M954.5 667v2M961.5 667v2M968.5 667v2M974.5 667v3.5M981.5 667v2M988.5 667v2M995.5 667v2M1002.5 667v2M1009.5 667v3.5M1016.5 667v2M1022.5 667v2M1029.5 667v2M1036.5 667v2M1043.5 667v3.5M1050.5 667v2M1057.5 667v2M1064.5 667v2M1070.5 667v2M1077.5 667v3.5M1084.5 667v2M1091.5 667v2M1098.5 667v2M1105.5 667v2M1111.5 667v3.5M1118.5 667v2M1125.5 667v2M1132.5 667v2M1139.5 667v2M1146.5 667v3.5M1153.5 667v2M1159.5 667v2M1166.5 667v2M1173.5 667v2M1180.5 667v3.5M1187.5 667v2M1194.5 667v2M1201.5 667v2M1207.5 667v2M1214.5 667v3.5M1221.5 667v2M1228.5 667v2M1235.5 667v2" stroke="#000" stroke-width="1"/><polyline points="186,438.75 212.5,456.25 240,475.5 255,487.5 289.25,512.5 307.5,527 312,528.5 323.75,537.5 330,539.5 357.5,562.5 380,576.25 392.5,582 420,596.25 460.5,616.5 495,635.5 512.5,647.5 530,655 542.5,662 552.5,664.5 563.75,666 595,666 607.5,663.75 620,660.5 631.25,658.25 640,652 648.75,647 665,635.75 675,626.25 687.5,615 698.75,607.5 702.5,603 725,582 735,575 750,561.25 770,546.25 776.25,540 793.75,527.5 808.75,512.5 848.75,475 865,460.5 872.5,448.75 885,435 906.25,416.25 916.25,405 925,391.25 940,372.5 950,363.75 962.5,355 975,348.25 980,346.5 1000,344 1005,341.75 1012.5,335.5 1020,330 1027.5,328.25 1040,321.5 1056.9,314 1064.4,307.9 1076.5,304.7 1080.3,301 1085,300.5 1087.8,296.6 1091.5,296.25 1096.25,291 1105.6,282.75 1112.2,281.25 1121.5,275.25 1125.3,276.2 1145,270.4 1149.7,267.75 1160,256 1171.25,244.7 1182.5,234.75 1190,232.5 1193.75,239.6 1205,236.25 1214.4,238.1 1221.9,242.8 1233.1,254 1238.4,261.5" fill="none" stroke="#505050" stroke-width="1"/><polyline points="186,474.5 212.5,456.25 240,440 277.5,417.5 289.25,411.25 323.25,395 335,389.5 357.5,378.25 362.5,377.5 392.5,365.75 423.75,354.5 428,354.3 435,355.25 441,354 455,350.5 460.5,348.75 487.5,340 490,339.5 527.5,328.75 563.75,318 597.5,310 631.25,302 666.25,294.25 700,288 723.75,283.75 725.75,284.5 728.75,280.5 733.75,281.25 770,275 793.75,271.75 797,271.5 802.5,268 806,268.6 813.75,271.25 817.5,269.5 823.75,271.5 830,270.75 837.5,269.25 857.5,266.75 863.75,265 868.75,266.75 872.5,265 887.5,261.75 898.75,260.75 903.75,259.25 907.5,261 920,260.5 925,261.25 935,260.5 942.5,260 957.5,258 975,253.75 995,250.75 1000,249.5 1010,248.25 1015,249 1040,245.6 1077.5,240.5 1100,238.25 1104.7,239 1111.25,237.5 1130,233.4 1142.2,232.1 1150,232.3 1160,233.4 1173.1,237.75 1188.1,244.7 1193.75,249 1214.4,261.5 1238.4,274.7" fill="none" stroke="#ff0000" stroke-width="1.150"/><path d="M728.500 231.500V667" stroke="#8b0000" stroke-width="1.200" stroke-dasharray="10 4 3 5.500"/><path d="M186 231V668" stroke="#ff0000" stroke-width="2.200"/><path d="M185 667.5h-3.5M185 663.5h-1.2M185 659.5h-1.2M185 656.5h-1.2M185 652.5h-1.2M185 648.5h-3.5M185 644.5h-1.2M185 640.5h-1.2M185 636.5h-1.2M185 633.5h-1.2M185 629.5h-3.5M185 625.5h-1.2M185 621.5h-1.2M185 617.5h-1.2M185 613.5h-1.2M185 609.5h-3.5M185 606.5h-1.2M185 602.5h-1.2M185 598.5h-1.2M185 594.5h-1.2M185 590.5h-3.5M185 586.5h-1.2M185 582.5h-1.2M185 579.5h-1.2M185 575.5h-1.2M185 571.5h-3.5M185 567.5h-1.2M185 563.5h-1.2M185 559.5h-1.2M185 555.5h-1.2M185 552.5h-3.5M185 548.5h-1.2M185 544.5h-1.2M185 540.5h-1.2M185 536.5h-1.2M185 532.5h-3.5M185 528.5h-1.2M185 525.5h-1.2M185 521.5h-1.2M185 517.5h-1.2M185 513.5h-3.5M185 509.5h-1.2M185 505.5h-1.2M185 501.5h-1.2M185 498.5h-1.2M185 494.5h-3.5M185 490.5h-1.2M185 486.5h-1.2M185 482.5h-1.2M185 478.5h-1.2M185 475.5h-3.5M185 471.5h-1.2M185 467.5h-1.2M185 463.5h-1.2M185 459.5h-1.2M185 455.5h-3.5M185 451.5h-1.2M185 448.5h-1.2M185 444.5h-1.2M185 440.5h-1.2M185 436.5h-3.5M185 432.5h-1.2M185 428.5h-1.2M185 424.5h-1.2M185 421.5h-1.2M185 417.5h-3.5M185 413.5h-1.2M185 409.5h-1.2M185 405.5h-1.2M185 401.5h-1.2M185 397.5h-3.5M185 394.5h-1.2M185 390.5h-1.2M185 386.5h-1.2M185 382.5h-1.2M185 378.5h-3.5M185 374.5h-1.2M185 370.5h-1.2M185 367.5h-1.2M185 363.5h-1.2M185 359.5h-3.5M185 355.5h-1.2M185 351.5h-1.2M185 347.5h-1.2M185 343.5h-1.2M185 340.5h-3.5M185 336.5h-1.2M185 332.5h-1.2M185 328.5h-1.2M185 324.5h-1.2M185 320.5h-3.5M185 316.5h-1.2M185 313.5h-1.2M185 309.5h-1.2M185 305.5h-1.2M185 301.5h-3.5M185 297.5h-1.2M185 293.5h-1.2M185 290.5h-1.2M185 286.5h-1.2M185 282.5h-3.5M185 278.5h-1.2M185 274.5h-1.2M185 270.5h-1.2M185 266.5h-1.2M185 263.5h-3.5M185 259.5h-1.2M185 255.5h-1.2M185 251.5h-1.2M185 247.5h-1.2M185 243.5h-3.5M185 239.5h-1.2M185 236.5h-1.2" stroke="#ff0000" stroke-width="1"/><text x="178.500" y="671.2" text-anchor="end" fill="#ff0000">0</text><text x="178.500" y="651.93" text-anchor="end" fill="#ff0000">10</text><text x="178.500" y="632.66" text-anchor="end" fill="#ff0000">20</text><text x="178.500" y="613.39" text-anchor="end" fill="#ff0000">30</text><text x="178.500" y="594.12" text-anchor="end" fill="#ff0000">40</text><text x="178.500" y="574.85" text-anchor="end" fill="#ff0000">50</text><text x="178.500" y="555.58" text-anchor="end" fill="#ff0000">60</text><text x="178.500" y="536.31" text-anchor="end" fill="#ff0000">70</text><text x="178.500" y="517.04" text-anchor="end" fill="#ff0000">80</text><text x="178.500" y="497.77" text-anchor="end" fill="#ff0000">90</text><text x="178.500" y="478.5" text-anchor="end" fill="#ff0000">100</text><text x="178.500" y="459.23" text-anchor="end" fill="#ff0000">110</text><text x="178.500" y="439.96" text-anchor="end" fill="#ff0000">120</text><text x="178.500" y="420.69" text-anchor="end" fill="#ff0000">130</text><text x="178.500" y="401.42" text-anchor="end" fill="#ff0000">140</text><text x="178.500" y="382.15" text-anchor="end" fill="#ff0000">150</text><text x="178.500" y="362.88" text-anchor="end" fill="#ff0000">160</text><text x="178.500" y="343.61" text-anchor="end" fill="#ff0000">170</text><text x="178.500" y="324.34" text-anchor="end" fill="#ff0000">180</text><text x="178.500" y="305.07" text-anchor="end" fill="#ff0000">190</text><text x="178.500" y="285.8" text-anchor="end" fill="#ff0000">200</text><text x="178.500" y="266.53" text-anchor="end" fill="#ff0000">210</text><text x="178.500" y="247.26" text-anchor="end" fill="#ff0000">220</text><path d="M102 231V666" stroke="#4a4a4a" stroke-width="2.200"/><path d="M101 235.5h-1.8M101 240.5h-1.8M101 245.5h-4M101 251.5h-1.8M101 256.5h-1.8M101 261.5h-1.8M101 266.5h-1.8M101 272.5h-4M101 277.5h-1.8M101 282.5h-1.8M101 288.5h-1.8M101 293.5h-1.8M101 298.5h-4M101 303.5h-1.8M101 309.5h-1.8M101 314.5h-1.8M101 319.5h-1.8M101 324.5h-4M101 330.5h-1.8M101 335.5h-1.8M101 340.5h-1.8M101 346.5h-1.8M101 351.5h-4M101 356.5h-1.8M101 361.5h-1.8M101 367.5h-1.8M101 372.5h-1.8M101 377.5h-4M101 382.5h-1.8M101 388.5h-1.8M101 393.5h-1.8M101 398.5h-1.8M101 404.5h-4M101 409.5h-1.8M101 414.5h-1.8M101 419.5h-1.8M101 425.5h-1.8M101 430.5h-4M101 435.5h-1.8M101 440.5h-1.8M101 446.5h-1.8M101 451.5h-1.8M101 456.5h-4M101 462.5h-1.8M101 467.5h-1.8M101 472.5h-1.8M101 477.5h-1.8M101 483.5h-4M101 488.5h-1.8M101 493.5h-1.8M101 498.5h-1.8M101 504.5h-1.8M101 509.5h-4M101 514.5h-1.8M101 520.5h-1.8M101 525.5h-1.8M101 530.5h-1.8M101 535.5h-4M101 541.5h-1.8M101 546.5h-1.8M101 551.5h-1.8M101 556.5h-1.8M101 562.5h-4M101 567.5h-1.8M101 572.5h-1.8M101 578.5h-1.8M101 583.5h-1.8M101 588.5h-4M101 593.5h-1.8M101 599.5h-1.8M101 604.5h-1.8M101 609.5h-1.8M101 614.5h-4M101 620.5h-1.8M101 625.5h-1.8M101 630.5h-1.8M101 636.5h-1.8M101 641.5h-4M101 646.5h-1.8M101 651.5h-1.8M101 657.5h-1.8M101 662.5h-1.8" stroke="#404040" stroke-width="1"/><text x="94.500" y="249.4" text-anchor="end" fill="#505050">108</text><text x="94.500" y="275.76" text-anchor="end" fill="#505050">107.5</text><text x="94.500" y="302.12" text-anchor="end" fill="#505050">107</text><text x="94.500" y="328.48" text-anchor="end" fill="#505050">106.5</text><text x="94.500" y="354.84" text-anchor="end" fill="#505050">106</text><text x="94.500" y="381.2" text-anchor="end" fill="#505050">105.5</text><text x="94.500" y="407.56" text-anchor="end" fill="#505050">105</text><text x="94.500" y="433.92" text-anchor="end" fill="#505050">104.5</text><text x="94.500" y="460.28" text-anchor="end" fill="#505050">104</text><text x="94.500" y="486.64" text-anchor="end" fill="#505050">103.5</text><text x="94.500" y="513" text-anchor="end" fill="#505050">103</text><text x="94.500" y="539.36" text-anchor="end" fill="#505050">102.5</text><text x="94.500" y="565.72" text-anchor="end" fill="#505050">102</text><text x="94.500" y="592.08" text-anchor="end" fill="#505050">101.5</text><text x="94.500" y="618.44" text-anchor="end" fill="#505050">101</text><text x="94.500" y="644.8" text-anchor="end" fill="#505050">100.5</text><text x="185.7" y="685" text-anchor="middle" fill="#000">0</text><text x="219.97" y="685" text-anchor="middle" fill="#000">1</text><text x="254.24" y="685" text-anchor="middle" fill="#000">2</text><text x="288.51" y="685" text-anchor="middle" fill="#000">3</text><text x="322.78" y="685" text-anchor="middle" fill="#000">4</text><text x="357.05" y="685" text-anchor="middle" fill="#000">5</text><text x="391.32" y="685" text-anchor="middle" fill="#000">6</text><text x="425.59" y="685" text-anchor="middle" fill="#000">7</text><text x="459.86" y="685" text-anchor="middle" fill="#000">8</text><text x="494.13" y="685" text-anchor="middle" fill="#000">9</text><text x="528.4" y="685" text-anchor="middle" fill="#000">10</text><text x="562.67" y="685" text-anchor="middle" fill="#000">11</text><text x="596.94" y="685" text-anchor="middle" fill="#000">12</text><text x="631.21" y="685" text-anchor="middle" fill="#000">13</text><text x="665.48" y="685" text-anchor="middle" fill="#000">14</text><text x="699.75" y="685" text-anchor="middle" fill="#000">15</text><text x="734.02" y="685" text-anchor="middle" fill="#000">16</text><text x="768.29" y="685" text-anchor="middle" fill="#000">17</text><text x="802.56" y="685" text-anchor="middle" fill="#000">18</text><text x="836.83" y="685" text-anchor="middle" fill="#000">19</text><text x="871.1" y="685" text-anchor="middle" fill="#000">20</text><text x="905.37" y="685" text-anchor="middle" fill="#000">21</text><text x="939.64" y="685" text-anchor="middle" fill="#000">22</text><text x="973.91" y="685" text-anchor="middle" fill="#000">23</text><text x="1008.18" y="685" text-anchor="middle" fill="#000">24</text><text x="1042.45" y="685" text-anchor="middle" fill="#000">25</text><text x="1076.72" y="685" text-anchor="middle" fill="#000">26</text><text x="1110.99" y="685" text-anchor="middle" fill="#000">27</text><text x="1145.26" y="685" text-anchor="middle" fill="#000">28</text><text x="1179.53" y="685" text-anchor="middle" fill="#000">29</text><text x="1213.8" y="685" text-anchor="middle" fill="#000">30</text><text x="711" y="699" text-anchor="middle" fill="#000">Sekunde</text><rect x="61" y="418" width="12.500" height="65" fill="#fff"/><rect x="146" y="435" width="11" height="29" fill="#fff"/><text transform="translate(71 450) rotate(-90)" text-anchor="middle" fill="#505050">Höhe (meter)</text><text transform="translate(155 449) rotate(-90)" text-anchor="middle" fill="#ff0000">km/h</text></svg>
<!-- p_bottom -->
<div style="left:4px;top:717px;width:1276px;height:307px;background:#6d7fdc"></div><div style="left:4px;top:717px;width:1006px;height:26px;background:linear-gradient(#6e84e0 0,#6e84e0 2.500px,#7878d0 3px,#4c54ba 3.500px,#4c54ba 4.200px,#98b8f2 5px,#94b4f0 6px,#7a98e2 7px,#7b9ae4 19px,#82a8f0 22.500px,#80a0ec 24.500px,#8088e0 25.200px,#8088e0 26px)"></div><div class="t" style="left:4px;top:726.5px;font-size:11px;line-height:14px;color:#d8e4f8;letter-spacing:0.273px;font-weight:bold;">Graph : Daten</div><div style="left:992px;top:727px;width:13px;height:12px;border:1px solid #9aa8ec;background:#a680b4;border-radius:2px"></div><svg style="left:994px;top:729px" width="9" height="8" viewBox="0 0 9 8"><path d="M1 .5l7 7M8 .5l-7 7" stroke="#d8c4e4" stroke-width="2"/></svg><div style="left:4px;top:742px;width:1001px;height:276px;background:#fff"></div><div style="left:1005px;top:744px;width:1px;height:275px;background:#606060"></div><div style="left:1006px;top:743px;width:1px;height:277px;background:#e8e8dc"></div><div style="left:5px;top:1018px;width:1001px;height:1px;background:#808080"></div><div style="left:5px;top:744px;width:1px;height:275px;background:#606060"></div><div style="left:4px;top:743px;width:1003px;height:1px;background:#e8ecd8"></div><div style="left:5px;top:744px;width:1001px;height:1px;background:#606060"></div><div style="left:4px;top:1019px;width:1002px;height:1px;background:#d8d8e8"></div><div style="left:1007px;top:743px;width:4px;height:281px;background:linear-gradient(90deg,#8a9ae6,#6d7fdc 50%,#5f6ed0)"></div><div style="left:5px;top:744px;width:985px;height:106px;border:1px solid #707070;background:#fff"></div><div style="left:6px;top:746px;width:983px;height:19px;background:#c0c0c0"></div><div style="left:6px;top:765px;width:983px;height:1px;background:#808080"></div><div style="left:6px;top:786px;width:983px;height:1px;background:#808080"></div><div style="left:6px;top:807px;width:983px;height:1px;background:#808080"></div><div style="left:6px;top:828px;width:983px;height:1px;background:#808080"></div><div style="left:24px;top:808px;width:1px;height:41px;background:#808080"></div><div class="t" style="left:8px;top:769px;font-size:11px;line-height:14px;color:#000;letter-spacing:-0.075px;">Laufzeit</div><div class="t" style="left:8px;top:790px;font-size:11px;line-height:14px;color:#800000;letter-spacing:-0.187px;">Cursor (Sekunde)</div><div class="t" style="left:27px;top:811px;font-size:11px;line-height:14px;color:#ff0000;letter-spacing:-0.157px;">Geschwindigkeit (km/h)</div><div class="t" style="left:27px;top:832px;font-size:11px;line-height:14px;color:#606060;letter-spacing:-0.072px;">Höhe (meter)</div><div style="left:7px;top:810px;width:13px;height:13px;background:#fff;border:1px solid;border-color:#808080 #e8e8e8 #e8e8e8 #808080;box-shadow:inset 1px 1px 0 #404040"></div><svg style="left:10px;top:813px" width="8" height="8" viewBox="0 0 8 8"><path d="M.5 3l2.500 2.500 4.500-4.500" fill="none" stroke="#000" stroke-width="1.800"/></svg><div style="left:7px;top:831px;width:13px;height:13px;background:#fff;border:1px solid;border-color:#808080 #e8e8e8 #e8e8e8 #808080;box-shadow:inset 1px 1px 0 #404040"></div><svg style="left:10px;top:834px" width="8" height="8" viewBox="0 0 8 8"><path d="M.5 3l2.500 2.500 4.500-4.500" fill="none" stroke="#000" stroke-width="1.800"/></svg><div style="left:1010px;top:721px;width:5px;height:303px;background:linear-gradient(90deg,#5864d0,#6d7fdc 30%,#7488e2)"></div><div style="left:1012px;top:717px;width:268px;height:26px;background:linear-gradient(#6e84e0 0,#6e84e0 2.500px,#7878d0 3px,#4c54ba 3.500px,#4c54ba 4.200px,#98b8f2 5px,#94b4f0 6px,#7a98e2 7px,#7b9ae4 19px,#82a8f0 22.500px,#80a0ec 24.500px,#8088e0 25.200px,#8088e0 26px)"></div><div class="t" style="left:1014px;top:726.5px;font-size:11px;line-height:14px;color:#d8e4f8;letter-spacing:0.393px;font-weight:bold;">Graph : Karte</div><div style="left:1261px;top:727px;width:13px;height:12px;border:1px solid #9aa8ec;background:#a680b4;border-radius:2px"></div><svg style="left:1263px;top:729px" width="9" height="8" viewBox="0 0 9 8"><path d="M1 .5l7 7M8 .5l-7 7" stroke="#d8c4e4" stroke-width="2"/></svg><div style="left:1015px;top:743px;width:261px;height:242px;background:#fff"></div><div style="left:1276px;top:743px;width:4px;height:248px;background:linear-gradient(90deg,#8a9ae6,#6d7fdc)"></div><div style="left:1015px;top:985px;width:265px;height:6px;background:linear-gradient(#6272d4,#6d7fdc 50%,#7a8ee2)"></div><div style="left:1015px;top:990px;width:265px;height:8px;background:#b0c9da"></div><div style="left:1015px;top:998px;width:265px;height:26px;background:#ece9d8"></div><div style="left:1015px;top:998px;width:265px;height:2px;background:#fbfaf6"></div><div style="left:1015px;top:1001px;width:265px;height:1px;background:#cbc5b0"></div><div style="left:1156px;top:986px;width:40px;height:40px;background:linear-gradient(#c4c4f0 0,#c8c8f2 3px,#f2f2fa 4px,#f6f6fa 100%);border:1px solid #202020"></div><div style="left:1160px;top:990px;width:32.500px;height:31.500px;border:1.500px solid #4a88d0;background:linear-gradient(#8ab2dc,#6e9ed0 50%,#5c90c8)"></div><svg style="left:1166px;top:998px" width="20" height="16" viewBox="1166 998 20 16"><path d="M1171.250 999h10v6.400h3.200L1176 1013l-8.500-7.600h3.750z" fill="#b8d2e8"/></svg><svg style="left:1015px;top:743px" width="261" height="242" viewBox="1015 743 261 242" font-family="Liberation Sans" font-size="11"><path d="M1111.5 753.5V955M1176.5 753.5V955M1242.5 753.5V955M1064 760.5H1269M1064 786.5H1269M1064 812.5H1269M1064 837.5H1269M1064 863.5H1269M1064 889.5H1269M1064 915.5H1269M1064 941.5H1269" stroke="#6c6c6c" stroke-width="1" stroke-dasharray="4.300 4.300" fill="none" shape-rendering="crispEdges"/><path d="M1064 753.5H1269V955" stroke="#000" stroke-width="1.500" fill="none"/><path d="M1064 753V955H1269.7" stroke="#000" stroke-width="2.400" fill="none"/><path d="M1062.5 955v2.5M1079.5 955v2.5M1095.5 955v2.5M1111.5 955v2.5M1128.5 955v2.5M1144.5 955v2.5M1161.5 955v2.5M1177.5 955v2.5M1193.5 955v2.5M1210.5 955v2.5M1226.5 955v2.5M1242.5 955v2.5M1259.5 955v2.5" stroke="#000" stroke-width="1"/><polyline points="1181,753.6 1182.5,770 1183,790 1182.9,812.2 1181.4,836.3 1178,857.4 1175,869.4 1170.5,890.4 1164.5,911.5 1157,934 1150,955" fill="none" stroke="#ff0000" stroke-width="1.300"/><path d="M1165 857.500l20.500 20M1185.500 857.500l-20.500 20" stroke="#ff0000" stroke-width="1"/><text x="1056.500" y="764" text-anchor="end" fill="#000">-5,400</text><text x="1056.500" y="790" text-anchor="end" fill="#000">-5,600</text><text x="1056.500" y="816" text-anchor="end" fill="#000">-5,800</text><text x="1056.500" y="841" text-anchor="end" fill="#000">-6,000</text><text x="1056.500" y="867" text-anchor="end" fill="#000">-6,200</text><text x="1056.500" y="893" text-anchor="end" fill="#000">-6,400</text><text x="1056.500" y="919" text-anchor="end" fill="#000">-6,600</text><text x="1056.500" y="945" text-anchor="end" fill="#000">-6,800</text><text x="1111" y="973" text-anchor="middle" fill="#000">500</text><text x="1176.5" y="973" text-anchor="middle" fill="#000">1,000</text><text x="1242" y="973" text-anchor="middle" fill="#000">1,500</text></svg>
<!-- p_dialog -->
<div style="left:185px;top:705px;width:640px;height:319px;background:#0a50dc;border-radius:3px 3px 0 0"></div><div style="left:185px;top:705px;width:640px;height:22px;border-radius:3px 3px 0 0;background:linear-gradient(#1a6cf0 0,#2a7cf4 2px,#0c5ee8 5px,#0556e2 50%,#0350da 85%,#0a58e4 100%)"></div><div style="left:185px;top:727px;width:5px;height:297px;background:linear-gradient(90deg,#0a3cc8,#1058e8 40%,#0a4ee0)"></div><div style="left:821px;top:727px;width:4px;height:297px;background:linear-gradient(90deg,#0a4ee0,#0a48d8 50%,#0838b8)"></div><div class="t" style="left:188.75px;top:711.3px;font-size:11.5px;line-height:15px;color:#fff;letter-spacing:0.275px;font-weight:bold;">Report-Generator - Accel Test</div><div style="left:806px;top:711px;width:13px;height:13px;border:1px solid #fff;border-radius:3px;background:linear-gradient(135deg,#f08060,#e04820 50%,#c03010)"></div><svg style="left:808.500px;top:713.500px" width="8" height="8" viewBox="0 0 8 8"><path d="M1 1l6 6M7 1l-6 6" stroke="#fff" stroke-width="1.800"/></svg><div style="left:190px;top:727px;width:631px;height:297px;background:#fff;border-top:1px solid #d8d2bc"></div><div style="left:190px;top:728px;width:611px;height:50px;background:#ece9d8"></div><div style="left:191px;top:729px;width:71px;height:49px;border-left:1px solid #fff;border-top:1px solid #fff"></div><div style="left:263px;top:729px;width:120px;height:49px;border-left:1px solid #fff;border-top:1px solid #fff"></div><div style="left:384px;top:729px;width:71px;height:49px;border-left:1px solid #fff;border-top:1px solid #fff"></div><div style="left:456px;top:729px;width:71px;height:49px;border-left:1px solid #fff;border-top:1px solid #fff"></div><div style="left:528px;top:729px;width:122px;height:49px;border-left:1px solid #fff;border-top:1px solid #fff"></div><div style="left:651px;top:729px;width:76px;height:49px;border-left:1px solid #fff;border-top:1px solid #fff"></div><div style="left:728px;top:729px;width:71px;height:49px;border-left:1px solid #fff;border-top:1px solid #fff"></div><svg style="left:190px;top:727px" width="613" height="297" viewBox="190 727 613 297"><path d="M190.5 728V1024M262.5 728V1024M383.5 728V1024M455.5 728V1024M527.5 728V1024M650.5 728V1024M727.5 728V1024M799.5 728V1024M190 728.500H800M190 778.5H802M190 798.5H802M190 818.5H802M190 838.5H802M190 858.5H802M190 878.5H802M190 898.5H802M190 918.5H802M190 938.5H802M190 958.5H802M190 978.5H802M190 998.5H802M190 1018.5H802" stroke="#808080" stroke-width="1" fill="none" shape-rendering="crispEdges"/></svg><div class="t" style="left:201.25px;top:748px;font-size:11px;line-height:14px;color:#000;letter-spacing:-0.191px;">Runde Nr.</div><div class="t" style="left:269.5px;top:748px;font-size:11px;line-height:14px;color:#000;letter-spacing:-0.213px;">Geschwindigkeit(km/h)</div><div class="t" style="left:400.5px;top:748px;font-size:11px;line-height:14px;color:#000;letter-spacing:0.015px;">Zeit(en)</div><div class="t" style="left:471.5px;top:748px;font-size:11px;line-height:14px;color:#000;letter-spacing:0.056px;">Entf.(m)</div><div class="t" style="left:533.4px;top:748px;font-size:11px;line-height:14px;color:#000;letter-spacing:-0.323px;">Runde als Einzel-Graph</div><div class="t" style="left:656.5px;top:748px;font-size:11px;line-height:14px;color:#000;letter-spacing:-0.360px;">Beschreibung</div><div class="t" style="left:252.583px;top:782.3px;font-size:11px;line-height:14px;color:#000;">1</div><div class="t" style="left:346.859px;top:782.3px;font-size:11px;line-height:14px;color:#000;">100.00</div><div class="t" style="left:446.183px;top:782.3px;font-size:11px;line-height:14px;color:#000;">0</div><div class="t" style="left:502.393px;top:782.3px;font-size:11px;line-height:14px;color:#000;">0.00</div><div class="t" style="left:654.5px;top:782.3px;font-size:11px;line-height:14px;color:#000;letter-spacing:-0.068px;">indigkeitsstart</div><div class="t" style="left:252.583px;top:802.3px;font-size:11px;line-height:14px;color:#000;">1</div><div class="t" style="left:347.675px;top:802.3px;font-size:11px;line-height:14px;color:#000;">110.00</div><div class="t" style="left:430.893px;top:802.3px;font-size:11px;line-height:14px;color:#000;">0.85</div><div class="t" style="left:496.276px;top:802.3px;font-size:11px;line-height:14px;color:#000;">24.71</div><div class="t" style="left:654.5px;top:802.3px;font-size:11px;line-height:14px;color:#000;letter-spacing:-0.244px;">windigkeitslinie</div><div class="t" style="left:252.583px;top:822.3px;font-size:11px;line-height:14px;color:#000;">1</div><div class="t" style="left:346.859px;top:822.3px;font-size:11px;line-height:14px;color:#000;">120.00</div><div class="t" style="left:430.893px;top:822.3px;font-size:11px;line-height:14px;color:#000;">1.75</div><div class="t" style="left:496.276px;top:822.3px;font-size:11px;line-height:14px;color:#000;">53.57</div><div class="t" style="left:654.5px;top:822.3px;font-size:11px;line-height:14px;color:#000;letter-spacing:-0.244px;">windigkeitslinie</div><div class="t" style="left:252.583px;top:842.3px;font-size:11px;line-height:14px;color:#000;">1</div><div class="t" style="left:346.859px;top:842.3px;font-size:11px;line-height:14px;color:#000;">130.00</div><div class="t" style="left:430.893px;top:842.3px;font-size:11px;line-height:14px;color:#000;">2.74</div><div class="t" style="left:496.276px;top:842.3px;font-size:11px;line-height:14px;color:#000;">87.84</div><div class="t" style="left:654.5px;top:842.3px;font-size:11px;line-height:14px;color:#000;letter-spacing:-0.244px;">windigkeitslinie</div><div class="t" style="left:252.583px;top:862.3px;font-size:11px;line-height:14px;color:#000;">1</div><div class="t" style="left:346.859px;top:862.3px;font-size:11px;line-height:14px;color:#000;">140.00</div><div class="t" style="left:430.893px;top:862.3px;font-size:11px;line-height:14px;color:#000;">3.82</div><div class="t" style="left:490.159px;top:862.3px;font-size:11px;line-height:14px;color:#000;">128.38</div><div class="t" style="left:654.5px;top:862.3px;font-size:11px;line-height:14px;color:#000;letter-spacing:-0.244px;">windigkeitslinie</div><div class="t" style="left:252.583px;top:882.3px;font-size:11px;line-height:14px;color:#000;">1</div><div class="t" style="left:346.859px;top:882.3px;font-size:11px;line-height:14px;color:#000;">150.00</div><div class="t" style="left:430.893px;top:882.3px;font-size:11px;line-height:14px;color:#000;">5.05</div><div class="t" style="left:490.159px;top:882.3px;font-size:11px;line-height:14px;color:#000;">178.19</div><div class="t" style="left:654.5px;top:882.3px;font-size:11px;line-height:14px;color:#000;letter-spacing:-0.244px;">windigkeitslinie</div><div class="t" style="left:252.583px;top:902.3px;font-size:11px;line-height:14px;color:#000;">1</div><div class="t" style="left:346.859px;top:902.3px;font-size:11px;line-height:14px;color:#000;">160.00</div><div class="t" style="left:430.893px;top:902.3px;font-size:11px;line-height:14px;color:#000;">6.51</div><div class="t" style="left:490.159px;top:902.3px;font-size:11px;line-height:14px;color:#000;">241.05</div><div class="t" style="left:654.5px;top:902.3px;font-size:11px;line-height:14px;color:#000;letter-spacing:-0.244px;">windigkeitslinie</div><div class="t" style="left:252.583px;top:922.3px;font-size:11px;line-height:14px;color:#000;">1</div><div class="t" style="left:346.859px;top:922.3px;font-size:11px;line-height:14px;color:#000;">170.00</div><div class="t" style="left:430.893px;top:922.3px;font-size:11px;line-height:14px;color:#000;">8.82</div><div class="t" style="left:490.159px;top:922.3px;font-size:11px;line-height:14px;color:#000;">346.34</div><div class="t" style="left:654.5px;top:922.3px;font-size:11px;line-height:14px;color:#000;letter-spacing:-0.244px;">windigkeitslinie</div><div class="t" style="left:252.583px;top:942.3px;font-size:11px;line-height:14px;color:#000;">1</div><div class="t" style="left:346.859px;top:942.3px;font-size:11px;line-height:14px;color:#000;">180.00</div><div class="t" style="left:424.776px;top:942.3px;font-size:11px;line-height:14px;color:#000;">10.74</div><div class="t" style="left:490.159px;top:942.3px;font-size:11px;line-height:14px;color:#000;">439.92</div><div class="t" style="left:654.5px;top:942.3px;font-size:11px;line-height:14px;color:#000;letter-spacing:-0.244px;">windigkeitslinie</div><div class="t" style="left:252.583px;top:962.3px;font-size:11px;line-height:14px;color:#000;">1</div><div class="t" style="left:346.859px;top:962.3px;font-size:11px;line-height:14px;color:#000;">190.00</div><div class="t" style="left:424.776px;top:962.3px;font-size:11px;line-height:14px;color:#000;">13.04</div><div class="t" style="left:490.159px;top:962.3px;font-size:11px;line-height:14px;color:#000;">558.42</div><div class="t" style="left:654.5px;top:962.3px;font-size:11px;line-height:14px;color:#000;letter-spacing:-0.244px;">windigkeitslinie</div><div class="t" style="left:252.583px;top:982.3px;font-size:11px;line-height:14px;color:#000;">1</div><div class="t" style="left:346.859px;top:982.3px;font-size:11px;line-height:14px;color:#000;">200.00</div><div class="t" style="left:424.776px;top:982.3px;font-size:11px;line-height:14px;color:#000;">15.76</div><div class="t" style="left:490.159px;top:982.3px;font-size:11px;line-height:14px;color:#000;">705.67</div><div style="left:651px;top:981.3px;width:76px;height:16px;overflow:hidden"><div class="t" style="left:-1.5px;top:1px;font-size:11px;line-height:14px;color:#000;letter-spacing:-0.161px;">windigkeit-Ende</div></div><svg style="left:582px;top:981.5px" width="15" height="14" viewBox="0 0 20 20"><path d="M1 3.5h18.500" stroke="#747474" stroke-width="1"/><path d="M1 6.5h18.500" stroke="#747474" stroke-width="1"/><path d="M1 10.5h18.500" stroke="#747474" stroke-width="1"/><path d="M1 13.5h18.500" stroke="#747474" stroke-width="1"/><path d="M1 17.5h18.500" stroke="#747474" stroke-width="1"/><path d="M2.500 1v17.500" stroke="#303030" stroke-width="1.300"/><path d="M4.500 17.500v2M8 17.500v2M11.500 17.500v2M15 17.500v2M18.500 17.500v2" stroke="#505050" stroke-width="1"/><path d="M3 10C5 3 6.500 1 8 2.500S11 9 13 8.500S16.500 12 18.500 14" fill="none" stroke="#2030f0" stroke-width="1.250"/><path d="M3 16l5-4.500 3 1.500 3-5 2 2 2.500-6" fill="none" stroke="#f02020" stroke-width="1.250"/></svg><div style="left:583px;top:990px;width:5px;height:4px;background:#000"></div><div style="left:802px;top:728px;width:18px;height:296px;background:linear-gradient(90deg,#f0f0e8,#fcfcfa 40%,#fefefe)"></div><div style="left:819.500px;top:728px;width:1.500px;height:296px;background:#d8d2bc"></div><div style="left:803.500px;top:730px;width:14px;height:15px;border-radius:2px;background:linear-gradient(#c8d8fa,#bccff6);border:1px solid #e4ecfc;box-shadow:0 1px 0 #9cb4e8"></div><svg style="left:806px;top:733px" width="9" height="7" viewBox="0 0 9 7"><path d="M.8 5.500L4.500 1.800 8.200 5.500" fill="none" stroke="#4a5a80" stroke-width="1.800"/></svg><div style="left:803.500px;top:749px;width:14px;height:15px;border-radius:2px;background:linear-gradient(#c8d8fa,#bccff6);border:1px solid #e4ecfc;box-shadow:0 1px 0 #9cb4e8"></div><div style="left:807px;top:752.5px;width:7px;height:1px;background:#8eaaf0"></div><div style="left:807px;top:754.5px;width:7px;height:1px;background:#8eaaf0"></div><div style="left:807px;top:756.5px;width:7px;height:1px;background:#8eaaf0"></div><div style="left:807px;top:758.5px;width:7px;height:1px;background:#8eaaf0"></div>
</body></html>
